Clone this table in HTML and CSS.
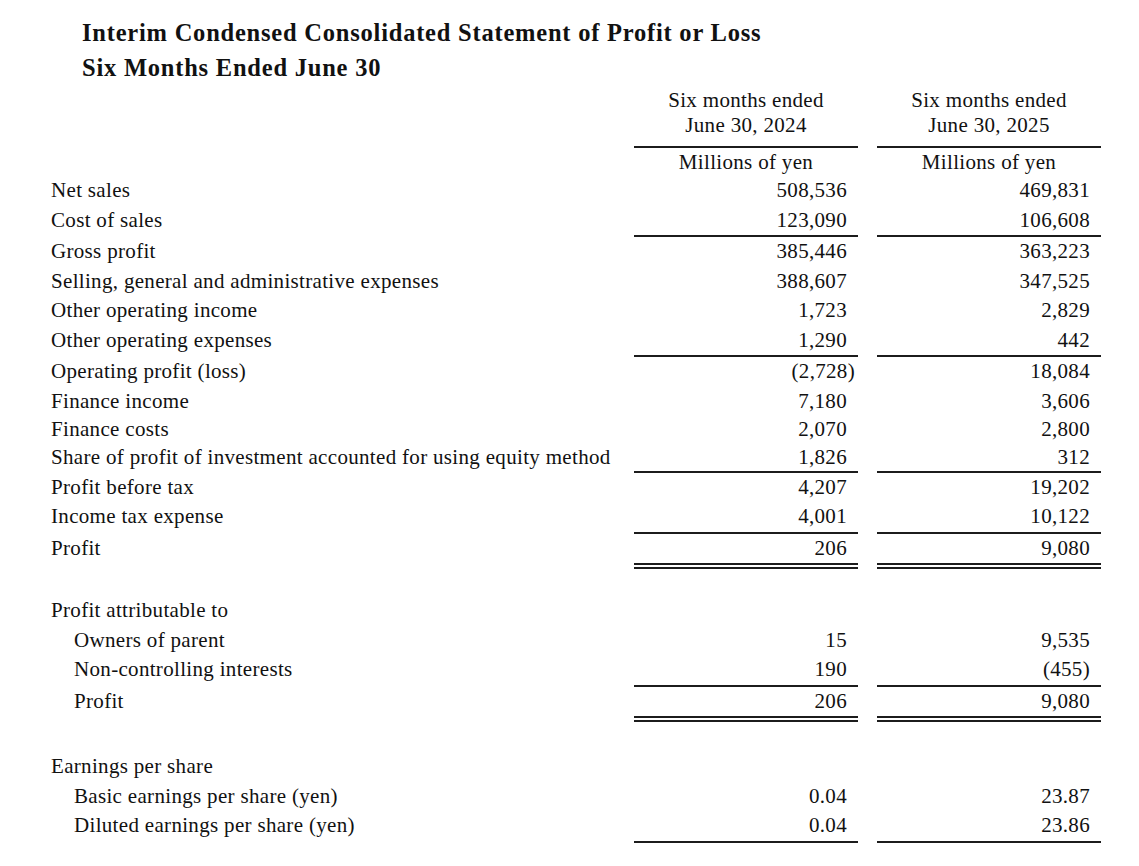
FILE: index.html
```html
<!DOCTYPE html>
<html lang="en">
<head>
<meta charset="utf-8">
<title>Interim Condensed Consolidated Statement of Profit or Loss</title>
<link rel="stylesheet" href="styles.css">
</head>
<body>
<main class="statement">
  <h1 class="title">
    <span class="title-line">Interim Condensed Consolidated Statement of Profit or Loss</span>
    <span class="title-line">Six Months Ended June 30</span>
  </h1>

  <div class="row row--head">
    <div class="label"></div>
    <div class="col-head">Six months ended<br>June 30, 2024</div>
    <div class="col-head">Six months ended<br>June 30, 2025</div>
  </div>
  <div class="row row--unit">
    <div class="label"></div>
    <div class="unit">Millions of yen</div>
    <div class="unit">Millions of yen</div>
  </div>

  <div class="row"><div class="label">Net sales</div><div class="val">508,536</div><div class="val">469,831</div></div>
  <div class="row row--rule"><div class="label">Cost of sales</div><div class="val">123,090</div><div class="val">106,608</div></div>
  <div class="row"><div class="label">Gross profit</div><div class="val">385,446</div><div class="val">363,223</div></div>
  <div class="row"><div class="label">Selling, general and administrative expenses</div><div class="val">388,607</div><div class="val">347,525</div></div>
  <div class="row"><div class="label">Other operating income</div><div class="val">1,723</div><div class="val">2,829</div></div>
  <div class="row row--rule"><div class="label">Other operating expenses</div><div class="val">1,290</div><div class="val">442</div></div>
  <div class="row"><div class="label">Operating profit (loss)</div><div class="val"><span class="hang">(2,728)</span></div><div class="val">18,084</div></div>
  <div class="row row--tight"><div class="label">Finance income</div><div class="val">7,180</div><div class="val">3,606</div></div>
  <div class="row row--tight"><div class="label">Finance costs</div><div class="val">2,070</div><div class="val">2,800</div></div>
  <div class="row row--tight row--rule"><div class="label">Share of profit of investment accounted for using equity method</div><div class="val">1,826</div><div class="val">312</div></div>
  <div class="row"><div class="label">Profit before tax</div><div class="val">4,207</div><div class="val">19,202</div></div>
  <div class="row row--rule"><div class="label">Income tax expense</div><div class="val">4,001</div><div class="val">10,122</div></div>
  <div class="row row--double"><div class="label">Profit</div><div class="val">206</div><div class="val">9,080</div></div>

  <div class="row row--section"><div class="label">Profit attributable to</div><div class="val"></div><div class="val"></div></div>
  <div class="row"><div class="label label--indent">Owners of parent</div><div class="val">15</div><div class="val">9,535</div></div>
  <div class="row row--rule"><div class="label label--indent">Non-controlling interests</div><div class="val">190</div><div class="val">(455)</div></div>
  <div class="row row--double"><div class="label label--indent">Profit</div><div class="val">206</div><div class="val">9,080</div></div>

  <div class="row row--section-lg"><div class="label">Earnings per share</div><div class="val"></div><div class="val"></div></div>
  <div class="row"><div class="label label--indent">Basic earnings per share (yen)</div><div class="val">0.04</div><div class="val">23.87</div></div>
  <div class="row row--rule"><div class="label label--indent">Diluted earnings per share (yen)</div><div class="val">0.04</div><div class="val">23.86</div></div>
</main>
</body>
</html>
```

FILE: styles.css
```css
* {
  box-sizing: border-box;
}

html,
body {
  margin: 0;
  padding: 0;
  background: #ffffff;
}

body {
  color: #111111;
  font-family: "Liberation Serif", "Times New Roman", serif;
  font-size: 21px;
  letter-spacing: 0.32px;
}

.statement {
  width: 1139px;
  padding-top: 15px;
}

.title {
  margin: 0 0 3px 0;
  padding-left: 82px;
  font-size: 24.5px;
  font-weight: bold;
  letter-spacing: 0.78px;
  line-height: 35px;
}

.title-line {
  display: block;
}

.row {
  display: grid;
  grid-template-columns: 564px 224px 224px;
  column-gap: 19px;
  align-items: start;
  padding-left: 51px;
  line-height: 29.5px;
}

.row--tight {
  line-height: 28px;
}

.label {
  white-space: nowrap;
}

.label--indent {
  padding-left: 23px;
}

.val {
  text-align: right;
  padding-right: 11px;
  white-space: nowrap;
}

.hang {
  margin-right: -8px;
}

.row--rule .val {
  border-bottom: 2px solid #1c1c1c;
}

.row--double .val {
  border-bottom: 6px double #1c1c1c;
}

.row--head {
  line-height: 25px;
}

.col-head {
  text-align: center;
  padding-bottom: 8px;
  border-bottom: 2px solid #1c1c1c;
}

.row--unit {
  line-height: 28px;
}

.unit {
  text-align: center;
}

.row--section {
  margin-top: 27px;
}

.row--section-lg {
  margin-top: 30px;
}
```
